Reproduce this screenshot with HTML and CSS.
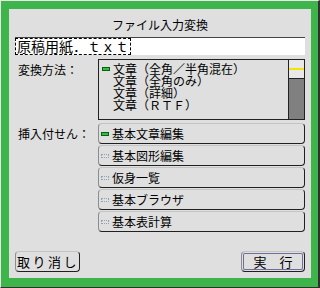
FILE: index.html
```html
<html>
    <head>
        <link rel="stylesheet" href="styles.css">
    </head>
    <body>
        <div class="window">
            <div class="panel">
                <div class="title">ファイル入力変換</div>
                <div class="field"><span class="sel">原稿用紙．ｔｘｔ</span></div>

                <div class="row">
                    <div class="label">変換方法：</div>
                    <div class="listbox">
                        <ul class="items">
                            <li><span class="mark on"></span>文章（全角／半角混在）</li>
                            <li><span class="mark"></span>文章（全角のみ）</li>
                            <li><span class="mark"></span>文章（詳細）</li>
                            <li><span class="mark"></span>文章（ＲＴＦ）</li>
                        </ul>
                        <div class="scroll">
                            <div class="thumb"><div class="ind"></div></div>
                        </div>
                    </div>
                </div>

                <div class="row row2">
                    <div class="label">挿入付せん：</div>
                    <div class="buttons">
                        <div class="btn"><span class="mark on"></span>基本文章編集</div>
                        <div class="btn"><span class="mark dim"></span>基本図形編集</div>
                        <div class="btn"><span class="mark dim"></span>仮身一覧</div>
                        <div class="btn"><span class="mark dim"></span>基本ブラウザ</div>
                        <div class="btn"><span class="mark dim"></span>基本表計算</div>
                    </div>
                </div>

                <div class="footer">
                    <div class="btn cancel">取り消し</div>
                    <div class="btn default">実　行</div>
                </div>
            </div>
        </div>
    </body>
</html>
```

FILE: styles.css
```css
body {
    margin: 0;
    font-family: "Noto Sans CJK JP", sans-serif;
}
.window {
    box-sizing: border-box;
    width: 320px;
    height: 288px;
    background: #3db54a;
    border-left: 1px solid #e8e8e8;
    border-top: 1px solid #e8e8e8;
    border-right: 2px solid #303030;
    border-bottom: 1px solid #303030;
    padding: 8px 7px 9px 8px;
}
.panel {
    box-sizing: border-box;
    height: 100%;
    background: #dfdfdf;
    padding: 0 6px 6px;
    display: flex;
    flex-direction: column;
    font-size: 12px;
    color: #000;
}
.title {
    box-sizing: border-box;
    height: 28px;
    padding-top: 6px;
    line-height: 20px;
    text-align: center;
}
.field {
    box-sizing: border-box;
    height: 18px;
    background: #fff;
    border-top: 1px solid #444;
    display: flex;
}
.sel {
    border: 1px dashed #000;
    font-size: 14px;
    line-height: 15px;
    padding: 0 1px;
}
.row {
    display: flex;
    margin-top: 4px;
}
.row2 {
    margin-top: 3px;
}
.label {
    box-sizing: border-box;
    width: 83px;
    padding-left: 3px;
    line-height: 22px;
}
.listbox {
    box-sizing: border-box;
    width: 207px;
    height: 61px;
    border: 1px solid #222;
    display: flex;
}
.items {
    flex: 1;
    list-style: none;
    margin: 0;
    padding: 3px 0 0 3px;
}
.items li {
    height: 12px;
    line-height: 12px;
    display: flex;
    align-items: center;
    white-space: nowrap;
}
.mark {
    box-sizing: border-box;
    flex: none;
    width: 8px;
    height: 4px;
    margin-right: 3px;
}
.mark.on {
    background: #2fc23f;
    border: 1px solid #0b5e17;
}
.mark.dim {
    border: 1px dotted #8fa3b3;
}
.scroll {
    width: 16px;
    box-sizing: border-box;
    border-left: 1px solid #222;
    background: #808080;
}
.thumb {
    height: 18px;
    background: #e8e8e8;
    border-bottom: 1px solid #222;
    overflow: hidden;
}
.ind {
    height: 2px;
    margin-top: 8px;
    background: #f2e600;
}
.buttons {
    width: 207px;
    display: flex;
    flex-direction: column;
    gap: 1px;
}
.btn {
    box-sizing: border-box;
    height: 21px;
    border: 1px solid;
    border-color: #c4c4c4 #202020 #202020 #8c8c8c;
    border-radius: 4px;
    background: #dfdfdf;
    display: flex;
    align-items: center;
    padding-left: 2px;
    white-space: nowrap;
}
.footer {
    margin-top: auto;
    display: flex;
    justify-content: space-between;
}
.cancel {
    width: 65px;
    padding-left: 1px;
    font-size: 13px;
    letter-spacing: 2.5px;
}
.default {
    width: 64px;
    padding-left: 0;
    justify-content: center;
    font-size: 13px;
    box-shadow: inset 0 0 0 1px #dfdfdf, inset 0 0 0 2px #6e6e9c;
}
```
